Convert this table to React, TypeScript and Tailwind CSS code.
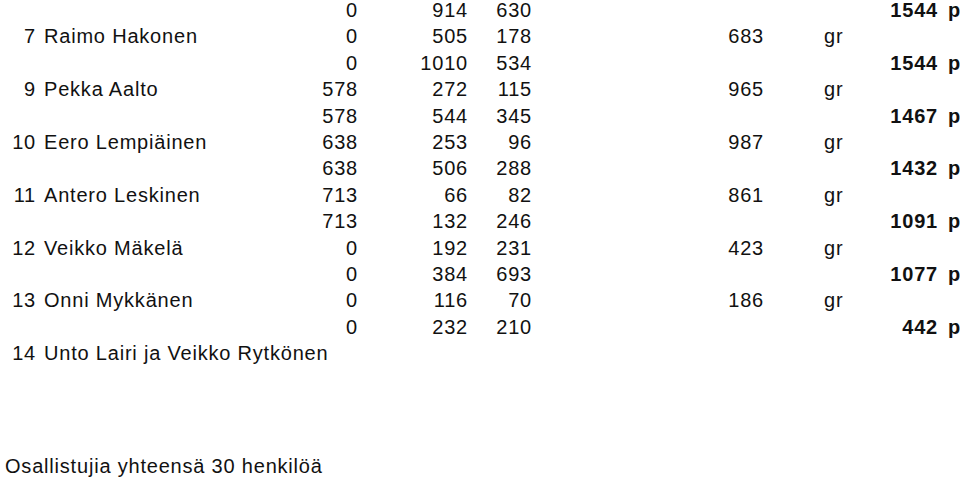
const rows: string[][] = [
  ['', '', '0', '914', '630', '', '', '1544', 'p'],
  ['7', 'Raimo Hakonen', '0', '505', '178', '683', 'gr'],
  ['', '', '0', '1010', '534', '', '', '1544', 'p'],
  ['9', 'Pekka Aalto', '578', '272', '115', '965', 'gr'],
  ['', '', '578', '544', '345', '', '', '1467', 'p'],
  ['10', 'Eero Lempiäinen', '638', '253', '96', '987', 'gr'],
  ['', '', '638', '506', '288', '', '', '1432', 'p'],
  ['11', 'Antero Leskinen', '713', '66', '82', '861', 'gr'],
  ['', '', '713', '132', '246', '', '', '1091', 'p'],
  ['12', 'Veikko Mäkelä', '0', '192', '231', '423', 'gr'],
  ['', '', '0', '384', '693', '', '', '1077', 'p'],
  ['13', 'Onni Mykkänen', '0', '116', '70', '186', 'gr'],
  ['', '', '0', '232', '210', '', '', '442', 'p'],
  ['14', 'Unto Lairi ja Veikko Rytkönen'],
]

export default function App() {
  return (
    <div
      className="w-[960px] h-[478px] overflow-hidden bg-white text-[#111] text-[20px] tracking-[0.8px]"
      style={{ fontFamily: '"Liberation Sans", Arial, sans-serif' }}
    >
      <div className="-mt-[3px]">
        {rows.map((r, i) => (
          <div
            key={i}
            className="grid grid-cols-[36px_265px_57px_110px_64px_232px_117px_57px_40px] leading-[26.4px] whitespace-nowrap"
          >
            <div className="text-right">{r[0]}</div>
            <div className="pl-[8px]">{r[1]}</div>
            <div className="text-right">{r[2]}</div>
            <div className="text-right">{r[3]}</div>
            <div className="text-right">{r[4]}</div>
            <div className="text-right">{r[5]}</div>
            <div className="pl-[60px]">{r[6]}</div>
            <div className="text-right font-bold">{r[7]}</div>
            <div className="pl-[10px] font-bold">{r[8]}</div>
          </div>
        ))}
      </div>

      <div className="mt-[86px] pl-[5px] leading-[26.4px] whitespace-nowrap">
        Osallistujia yhteensä 30 henkilöä
      </div>
    </div>
  )
}
